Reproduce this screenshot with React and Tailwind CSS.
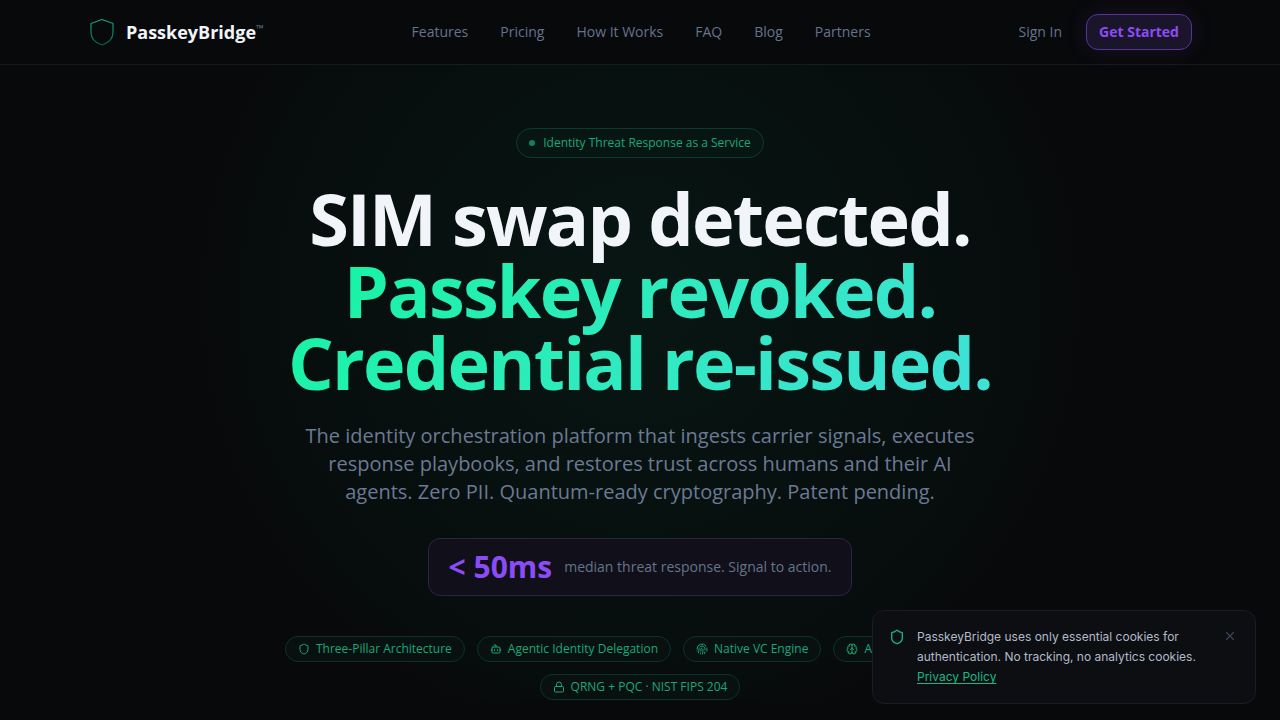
import React, { useState } from 'react';
import { Shield, Bot, Fingerprint, Brain, Lock, X } from 'lucide-react';

const navLinks = [
  { label: 'Features', href: '#features' },
  { label: 'Pricing', href: '#pricing' },
  { label: 'How It Works', href: '#how-it-works' },
  { label: 'FAQ', href: '#faq' },
  { label: 'Blog', href: '#blog' },
  { label: 'Partners', href: '#partners' },
];

const pillars = [
  { icon: Shield, label: 'Three-Pillar Architecture' },
  { icon: Bot, label: 'Agentic Identity Delegation' },
  { icon: Fingerprint, label: 'Native VC Engine' },
  { icon: Brain, label: 'AI Threat Intelligence' },
  { icon: Lock, label: 'QRNG + PQC · NIST FIPS 204' },
];

function Logo() {
  return (
    <svg width="28" height="28" viewBox="0 0 28 28" fill="none" aria-hidden="true">
      <defs>
        <linearGradient id="logoStroke" x1="14" y1="1" x2="14" y2="27" gradientUnits="userSpaceOnUse">
          <stop stopColor="#14a87c" />
          <stop offset="1" stopColor="#0c5f4a" />
        </linearGradient>
      </defs>
      <path
        d="M14 1.5L25 5.5V14C25 20.5 20.5 25 14 27C7.5 25 3 20.5 3 14V5.5L14 1.5Z"
        stroke="url(#logoStroke)"
        strokeWidth="1.2"
        strokeLinejoin="round"
      />
    </svg>
  );
}

function Header() {
  return (
    <header className="relative z-10 border-b border-[#131b1f] bg-[#08090b]">
      <div className="mx-auto flex h-16 max-w-6xl items-center justify-between px-6">
        <a href="/" className="flex items-center gap-2.5">
          <Logo />
          <span className="flex items-start text-lg font-bold text-[#f1f5f9]">
            PasskeyBridge
            <span className="text-[10px] leading-5 font-normal text-[#64748b]">™</span>
          </span>
        </a>
        <nav className="flex items-center gap-8">
          {navLinks.map((link) => (
            <a key={link.label} href={link.href} className="text-sm text-[#64748b] hover:text-slate-300">
              {link.label}
            </a>
          ))}
        </nav>
        <div className="flex items-center gap-6">
          <a href="/sign-in" className="text-sm text-[#64748b] hover:text-slate-300">Sign In</a>
          <button
            type="button"
            className="h-9 rounded-xl border border-[#56359a] bg-[#1a152b] px-3 text-sm font-bold text-[#8b4cf5] shadow-[0_0_24px_rgba(139,92,246,0.12)]"
          >
            Get Started
          </button>
        </div>
      </div>
    </header>
  );
}

function Hero() {
  return (
    <main className="relative flex flex-col items-center px-6 pt-[63px] pb-5 text-center">
      {/* Soft green glow behind the headline */}
      <div className="pointer-events-none absolute inset-x-0 -top-16 h-[700px] bg-[radial-gradient(circle_at_50%_300px,#081613_0px,#07110f_220px,#070d0d_380px,#08090b_440px)]" />

      <div className="relative flex items-center gap-2 rounded-full border border-[#0e3a2e] bg-[#081613] px-3 py-1.5 text-xs text-[#17a87c]">
        <span className="size-1.5 rounded-full bg-[#128060]" />
        Identity Threat Response as a Service
      </div>

      <h1 className="relative mt-6 text-7xl leading-none font-bold tracking-tight text-[#f1f5f9]">
        SIM swap detected.
        <span className="block bg-linear-135 from-[#10f5a0] to-[#40e0d8] bg-clip-text text-transparent">
          Passkey revoked.
          <br />
          Credential re-issued.
        </span>
      </h1>

      <p className="relative mt-6 max-w-2xl text-xl leading-7 text-[#6b7a94]">
        The identity orchestration platform that ingests carrier signals, executes response
        playbooks, and restores trust across humans and their AI agents. Zero PII.
        Quantum-ready cryptography. Patent pending.
      </p>

      <div className="relative mt-8 flex items-center gap-3 rounded-xl border border-[#2a2541] bg-[#11101a] px-5 py-2.5">
        <span className="text-3xl font-bold text-[#8b4cf5]">&lt; 50ms</span>
        <span className="text-sm text-[#64748b]">median threat response. Signal to action.</span>
      </div>

      <ul className="relative mt-10 flex max-w-3xl flex-wrap justify-center gap-3">
        {pillars.map(({ icon: Icon, label }) => (
          <li
            key={label}
            className="flex items-center gap-1.5 rounded-full border border-[#0d3228] bg-[#08110f] px-3 py-1 text-xs text-[#17a87c]"
          >
            <Icon size={12} />
            {label}
          </li>
        ))}
      </ul>
    </main>
  );
}

function CookieNotice({ onClose }) {
  return (
    <aside className="fixed right-6 bottom-4 z-20 flex w-96 items-start gap-3 rounded-xl border border-[#1a1d25] bg-[#0d0e12] p-4 font-[Inter,sans-serif]">
      <Shield size={16} className="mt-0.5 shrink-0 text-[#17b888]" />
      <p className="flex-1 text-xs leading-5 text-[#b0bac8]">
        PasskeyBridge uses only essential cookies for authentication. No tracking, no analytics cookies.{' '}
        <a href="/privacy" className="text-[#17b888] underline underline-offset-2">Privacy Policy</a>
      </p>
      <button type="button" aria-label="Dismiss" onClick={onClose} className="p-0.5 text-[#3c4554]">
        <X size={14} />
      </button>
    </aside>
  );
}

function App() {
  const [showCookies, setShowCookies] = useState(true);

  return (
    <div className="min-h-screen overflow-hidden bg-[#08090b] font-['Open_Sans',sans-serif]">
      <Header />
      <Hero />
      {showCookies && <CookieNotice onClose={() => setShowCookies(false)} />}
    </div>
  );
}

export default App;
